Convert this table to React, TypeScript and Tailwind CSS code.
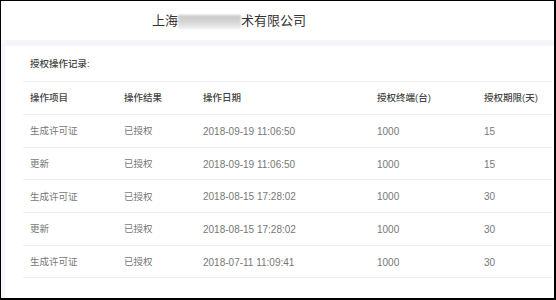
const records = [
  { item: "生成许可证", result: "已授权", date: "2018-09-19 11:06:50", terminals: 1000, days: 15 },
  { item: "更新", result: "已授权", date: "2018-09-19 11:06:50", terminals: 1000, days: 15 },
  { item: "生成许可证", result: "已授权", date: "2018-08-15 17:28:02", terminals: 1000, days: 30 },
  { item: "更新", result: "已授权", date: "2018-08-15 17:28:02", terminals: 1000, days: 30 },
  { item: "生成许可证", result: "已授权", date: "2018-07-11 11:09:41", terminals: 1000, days: 30 },
]

const cols = "grid grid-cols-[94px_79px_174px_107px_1fr] items-center"

export default function App() {
  return (
    <div
      className="w-[556px] h-[300px] overflow-hidden bg-white border-t border-l border-r-2 border-b-2 border-black flex flex-col"
      style={{ fontFamily: '"Liberation Sans", "Noto Sans CJK SC", sans-serif' }}
    >
      <header className="h-[39px] shrink-0 flex items-center pl-[151px] text-[13px] text-[#333]">
        <span>上海</span>
        <span className="inline-block w-[63px] h-[14px] mt-[3px] bg-gradient-to-b from-[#c8c8c8] via-[#d6d6d6] to-[#f1f1f1] blur-[1px]" />
        <span>术有限公司</span>
      </header>

      <div className="flex-1 bg-[#f6f5fa] pt-[6px] pl-[4px] flex">
        <section className="flex-1 bg-white pl-[18px] pr-[2px]">
          <div className="h-[36px] pt-[2px] border-b border-[#f0eff5] flex items-center pl-[7px] text-[9.5px] font-medium text-[#444]">
            授权操作记录:
          </div>

          <div className={`${cols} h-[33px] pt-[1px] border-b border-[#f0eff5] text-[9.5px] font-medium text-[#444]`}>
            <span className="pl-[7px]">操作项目</span>
            <span className="pl-[7px]">操作结果</span>
            <span className="pl-[7px]">操作日期</span>
            <span className="pl-[7px]">授权终端(台)</span>
            <span className="pl-[7px]">授权期限(天)</span>
          </div>

          {records.map((r, i) => (
            <div key={i} className={`${cols} h-[32.7px] pt-[1px] border-b border-[#f0eff5] text-[9.5px] text-[#777]`}>
              <span className="pl-[7px]">{r.item}</span>
              <span className="pl-[7px]">{r.result}</span>
              <span className="pl-[7px] text-[10px]">{r.date}</span>
              <span className="pl-[7px] text-[10px]">{r.terminals}</span>
              <span className="pl-[7px] text-[10px]">{r.days}</span>
            </div>
          ))}
        </section>
      </div>
    </div>
  )
}
